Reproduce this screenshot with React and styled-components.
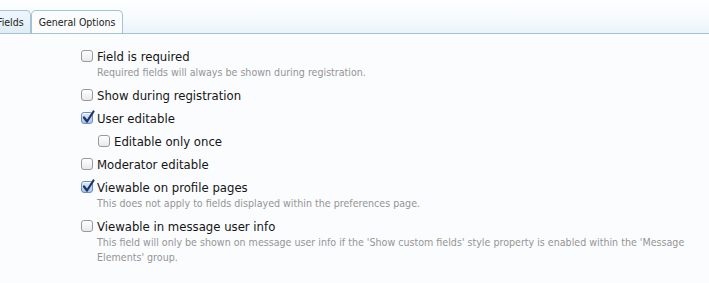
import React from "react";
import styled, { createGlobalStyle } from "styled-components";

const Global = createGlobalStyle`
  html, body { margin: 0; padding: 0; background: #fbfcfe; }
  body { font-family: "DejaVu Sans Condensed", "DejaVu Sans", sans-serif; }
`;

const Page = styled.div`
  width: 709px;
  height: 283px;
  overflow: hidden;
  background: #fbfcfe;
`;

const TabBar = styled.div`
  height: 33px;
  display: flex;
  align-items: flex-end;
  border-bottom: 1px solid #a6c2d2;
  background: linear-gradient(to bottom, #fdfeff 0%, #f7fbfd 50%, #ebf4fa 100%);
  overflow: hidden;
`;

const Tab = styled.div`
  height: ${(p) => (p.$active ? "24px" : "23px")};
  margin-bottom: ${(p) => (p.$active ? "-1px" : "0")};
  box-sizing: border-box;
  display: flex;
  align-items: center;
  padding: 0 ${(p) => (p.$active ? "7px" : "6px")};
  font-size: 10.5px;
  color: #222;
  border: 1px solid #a6c2d2;
  border-bottom: ${(p) => (p.$active ? "1px solid #fbfcfe" : "none")};
  border-radius: 5px 5px 0 0;
  background: ${(p) =>
    p.$active ? "#fbfcfe" : "linear-gradient(to bottom, #eef6fb, #e1edf5)"};
  margin-left: ${(p) => p.$offset || "0"};
  flex: none;
`;

const Options = styled.div`
  display: flex;
  flex-direction: column;
  gap: 7px;
  padding: 14px 0 0 81px;
`;

const Item = styled.div`
  display: flex;
  flex-direction: column;
  margin-left: ${(p) => (p.$indent ? "17px" : "0")};
`;

const LabelRow = styled.label`
  display: flex;
  align-items: center;
  height: 16px;
  font-size: 13px;
  color: #151515;
  gap: 4px;
`;

const Box = styled.span`
  width: 12px;
  height: 12px;
  box-sizing: border-box;
  border-radius: 3px;
  position: relative;
  flex: none;
  border: 1px solid ${(p) => (p.$checked ? "#6b8fbf" : "#9a9a9a")};
  background: ${(p) =>
    p.$checked
      ? "linear-gradient(to bottom, #dfeaf8, #a9c4e8)"
      : "linear-gradient(to bottom, #ffffff, #e9e9e9)"};
  box-shadow: inset 0 1px 0 rgba(255,255,255,0.8);
`;

const Tick = styled.svg`
  position: absolute;
  left: 0px;
  top: -3px;
  width: 13px;
  height: 14px;
  overflow: visible;
`;

const Desc = styled.div`
  font-size: 10.6px;
  line-height: 15px;
  color: #959595;
  padding-left: 16px;
  margin-top: 1px;
  max-width: 620px;
`;

function Check({ checked }) {
  return (
    <Box $checked={checked}>
      {checked && (
        <Tick viewBox="0 0 13 14">
          <path
            d="M2 7.5 L5 11.5 L11.5 1.5"
            fill="none"
            stroke="#1c3566"
            strokeWidth="2.2"
            strokeLinecap="round"
            strokeLinejoin="round"
          />
        </Tick>
      )}
    </Box>
  );
}

const items = [
  {
    label: "Field is required",
    desc: ["Required fields will always be shown during registration."],
  },
  { label: "Show during registration" },
  { label: "User editable", checked: true },
  { label: "Editable only once", indent: true },
  { label: "Moderator editable" },
  {
    label: "Viewable on profile pages",
    checked: true,
    desc: ["This does not apply to fields displayed within the preferences page."],
  },
  {
    label: "Viewable in message user info",
    desc: [
      "This field will only be shown on message user info if the 'Show custom fields' style property is enabled within the 'Message",
      "Elements' group.",
    ],
  },
];

export default function App() {
  return (
    <Page>
      <Global />
      <TabBar>
        <Tab $offset="-10px">Fields</Tab>
        <Tab $active>General Options</Tab>
      </TabBar>
      <Options>
        {items.map((it) => (
          <Item key={it.label} $indent={it.indent}>
            <LabelRow>
              <Check checked={it.checked} />
              {it.label}
            </LabelRow>
            {it.desc && (
              <Desc>
                {it.desc.map((d) => (
                  <div key={d}>{d}</div>
                ))}
              </Desc>
            )}
          </Item>
        ))}
      </Options>
    </Page>
  );
}
